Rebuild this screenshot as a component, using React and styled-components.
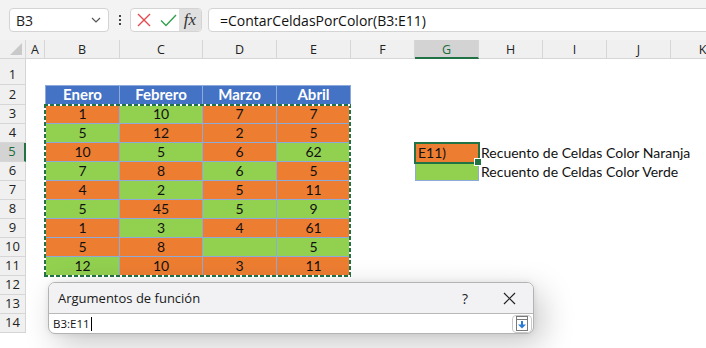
import React from 'react';
import styled, { createGlobalStyle } from 'styled-components';

const GlobalStyle = createGlobalStyle`
  * { box-sizing: border-box; }
  body {
    margin: 0;
    background: #fff;
    font-family: "Open Sans", "Noto Sans", sans-serif;
    overflow: hidden;
  }
`;

const ORANGE = '#ed7d31';
const GREEN = '#92d050';
const BLUE = '#4472c4';
const TBORDER = '#8eaadb';
const XL = '#217346';

const Page = styled.div`
  position: relative;
  width: 706px;
  height: 348px;
  overflow: hidden;
  background: #fff;
`;

const Toolbar = styled.div`
  display: flex;
  align-items: center;
  height: 40px;
  padding-left: 9px;
  background: #f3f3f3;
`;

const NameBox = styled.div`
  display: flex;
  align-items: center;
  justify-content: space-between;
  width: 100px;
  height: 24px;
  padding: 0 7px 0 6px;
  background: #fff;
  border: 1px solid #d4d4d4;
  border-radius: 4px;
  font-size: 14px;
  color: #222;
`;

const Grip = styled.div`
  display: flex;
  flex-direction: column;
  gap: 2px;
  margin: 0 9px 0 10px;
  span {
    width: 2px;
    height: 2px;
    background: #444;
  }
`;

const FxGroup = styled.div`
  display: flex;
  align-items: stretch;
  width: 72px;
  height: 24px;
  background: #fff;
  border: 1px solid #d4d4d4;
  border-radius: 4px;
  overflow: hidden;
`;

const FxButton = styled.div`
  display: flex;
  align-items: center;
  justify-content: center;
  width: ${({ $w }) => $w}px;
  background: ${({ $active }) => ($active ? '#e0e0e0' : 'transparent')};
  font-family: "Liberation Serif", "DejaVu Serif", serif;
  font-style: italic;
  font-size: 17px;
  color: #333;
`;

const FormulaInput = styled.div`
  flex: 1;
  display: flex;
  align-items: center;
  height: 24px;
  margin: 0 -8px 0 6px;
  padding-left: 11px;
  background: #fff;
  border: 1px solid #d4d4d4;
  border-radius: 4px;
  font-size: 14px;
  color: #111;
`;

const Sheet = styled.div`
  display: grid;
  grid-template-columns: 26px 19px 75px 83px 74px 74px 64px 64px 64px 64px 64px 64px;
  grid-template-rows: 19px 25.5px 20.5px repeat(12, 19px);
  font-family: Lato, "Liberation Sans", sans-serif;
  font-size: 14px;
`;

const Corner = styled.div`
  grid-row: 1;
  grid-column: 1;
  position: relative;
  background: #f0f0f0;
  border-right: 1px solid #d6d6d6;
  border-bottom: 1px solid #d6d6d6;
  &::after {
    content: '';
    position: absolute;
    right: 3px;
    bottom: 3px;
    width: 12px;
    height: 12px;
    background: #c9c9c9;
    clip-path: polygon(100% 0, 100% 100%, 0 100%);
  }
`;

const ColHead = styled.div`
  grid-row: 1;
  grid-column: ${({ $c }) => $c};
  display: flex;
  align-items: center;
  justify-content: center;
  padding-top: 1px;
  background: ${({ $sel }) => ($sel ? '#d3d3d3' : '#f0f0f0')};
  border-right: 1px solid #d6d6d6;
  border-bottom: ${({ $sel }) => ($sel ? `2px solid ${XL}` : '1px solid #d6d6d6')};
  font-family: "Open Sans", sans-serif;
  font-size: 12.5px;
  color: ${({ $sel }) => ($sel ? '#1d6b3b' : '#222')};
`;

const RowHead = styled.div`
  grid-row: ${({ $r }) => $r};
  grid-column: 1;
  display: flex;
  align-items: flex-end;
  justify-content: center;
  padding-bottom: 1px;
  background: ${({ $sel }) => ($sel ? '#d3d3d3' : '#f0f0f0')};
  border-bottom: 1px solid #d6d6d6;
  border-right: ${({ $sel }) => ($sel ? `2px solid ${XL}` : '1px solid #d6d6d6')};
  font-family: "Open Sans", sans-serif;
  font-size: 13px;
  line-height: 17px;
  color: ${({ $sel }) => ($sel ? '#1d6b3b' : '#222')};
`;

const fills = { o: ORANGE, g: GREEN, h: BLUE };

const TCell = styled.div`
  grid-row: ${({ $r }) => $r};
  grid-column: ${({ $c }) => $c};
  display: flex;
  align-items: flex-end;
  justify-content: center;
  line-height: 17px;
  padding-bottom: 1px;
  background: ${({ $fill }) => fills[$fill]};
  border-right: 1px solid ${TBORDER};
  border-bottom: 1px solid ${TBORDER};
  border-left: ${({ $first }) => ($first ? `1px solid ${TBORDER}` : 'none')};
  border-top: ${({ $top }) => ($top ? `1px solid ${TBORDER}` : 'none')};
  color: ${({ $fill }) => ($fill === 'h' ? '#fff' : '#111')};
  font-weight: ${({ $fill }) => ($fill === 'h' ? 700 : 400)};
  font-size: ${({ $fill }) => ($fill === 'h' ? '15px' : '14px')};
`;

const Marquee = styled.div`
  grid-row: 4 / 13;
  grid-column: 3 / 7;
  margin: -1px 0 -1px -1px;
  z-index: 2;
  pointer-events: none;
  background:
    repeating-linear-gradient(90deg, ${XL} 0 4px, #fff 4px 6px) top left / 100% 2px no-repeat,
    repeating-linear-gradient(90deg, ${XL} 0 4px, #fff 4px 6px) bottom left / 100% 2px no-repeat,
    repeating-linear-gradient(180deg, ${XL} 0 4px, #fff 4px 6px) top left / 2px 100% no-repeat,
    repeating-linear-gradient(180deg, ${XL} 0 4px, #fff 4px 6px) top right / 2px 100% no-repeat;
`;

const ActiveCell = styled.div`
  grid-row: 6;
  grid-column: 8;
  position: relative;
  z-index: 3;
  display: flex;
  align-items: flex-end;
  margin: -1px -1px -2px -1px;
  padding: 0 0 1px 2px;
  line-height: 17px;
  background: ${ORANGE};
  border: 2px solid ${XL};
  color: #111;
  &::after {
    content: '';
    position: absolute;
    right: -4px;
    bottom: -4px;
    width: 6px;
    height: 6px;
    background: ${XL};
    border: 1px solid #fff;
  }
`;

const SwatchCell = styled.div`
  grid-row: 7;
  grid-column: 8;
  background: ${GREEN};
  border: 1px solid ${TBORDER};
  border-top: none;
`;

const Label = styled.div`
  grid-row: ${({ $r }) => $r};
  grid-column: 9;
  display: flex;
  align-items: flex-end;
  padding: 0 0 1px 2px;
  line-height: 17px;
  white-space: nowrap;
  color: #111;
`;

const Dialog = styled.div`
  position: absolute;
  left: 48px;
  top: 282px;
  width: 486px;
  height: 52px;
  display: flex;
  flex-direction: column;
  background: #fff;
  border: 1px solid #b3b3b3;
  border-radius: 7px;
  overflow: hidden;
  box-shadow: 8px 10px 32px rgba(0, 0, 0, 0.22), 0 0 6px rgba(0, 0, 0, 0.08);
  z-index: 10;
`;

const DialogTitle = styled.div`
  flex: none;
  display: flex;
  align-items: center;
  height: 31px;
  padding: 0 14px 0 9px;
  background: #f2f2f5;
  border-bottom: 1px solid #b8b8b8;
  font-size: 13px;
  color: #1a1a1a;
`;

const TitleText = styled.span`
  flex: 1;
`;

const TitleButton = styled.span`
  display: flex;
  align-items: center;
  justify-content: center;
  width: 20px;
  margin-left: ${({ $gap }) => $gap}px;
  font-size: 14px;
  color: #222;
`;

const DialogInput = styled.div`
  flex: 1;
  display: flex;
  align-items: center;
  padding: 0 1px 0 4px;
  font-size: 11.5px;
  color: #111;
`;

const Caret = styled.span`
  width: 1px;
  height: 14px;
  margin-left: 1px;
  background: #000;
`;

const Spacer = styled.span`
  flex: 1;
`;

const CollapseButton = styled.div`
  display: flex;
  align-items: center;
  justify-content: center;
  width: 20px;
  height: 18px;
  border: 1px solid #c8c8c8;
  border-radius: 4px;
`;

const header = ['Enero', 'Febrero', 'Marzo', 'Abril'];
const data = [
  [[1, 'o'], [10, 'g'], [7, 'o'], [7, 'o']],
  [[5, 'g'], [12, 'o'], [2, 'o'], [5, 'o']],
  [[10, 'o'], [5, 'g'], [6, 'o'], [62, 'g']],
  [[7, 'g'], [8, 'o'], [6, 'g'], [5, 'o']],
  [[4, 'o'], [2, 'g'], [5, 'o'], [11, 'o']],
  [[5, 'g'], [45, 'o'], [5, 'g'], [9, 'g']],
  [[1, 'o'], [3, 'g'], [4, 'o'], [61, 'o']],
  [[5, 'o'], [8, 'o'], ['', 'g'], [5, 'g']],
  [[12, 'g'], [10, 'o'], [3, 'o'], [11, 'o']],
];
const cols = ['A', 'B', 'C', 'D', 'E', 'F', 'G', 'H', 'I', 'J', 'K'];

function Chevron() {
  return (
    <svg width="10" height="6" viewBox="0 0 10 6">
      <polyline points="1,1 5,5 9,1" fill="none" stroke="#555" strokeWidth="1.2" />
    </svg>
  );
}

export default function App() {
  return (
    <Page>
      <GlobalStyle />
      <Toolbar>
        <NameBox>
          <span>B3</span>
          <Chevron />
        </NameBox>
        <Grip>
          <span />
          <span />
          <span />
        </Grip>
        <FxGroup>
          <FxButton $w={26}>
            <svg width="14" height="14" viewBox="0 0 14 14">
              <path d="M1 1 L13 13 M13 1 L1 13" stroke="#e5484d" strokeWidth="1.4" />
            </svg>
          </FxButton>
          <FxButton $w={22}>
            <svg width="17" height="13" viewBox="0 0 17 13">
              <polyline points="1,6.5 6,11.5 16,1" fill="none" stroke="#30a14e" strokeWidth="1.4" />
            </svg>
          </FxButton>
          <FxButton $w={22} $active>fx</FxButton>
        </FxGroup>
        <FormulaInput>=ContarCeldasPorColor(B3:E11)</FormulaInput>
      </Toolbar>

      <Sheet>
        <Corner />
        {cols.map((c, i) => (
          <ColHead key={c} $c={i + 2} $sel={c === 'G'}>
            {c}
          </ColHead>
        ))}
        {Array.from({ length: 14 }, (_, i) => (
          <RowHead key={i} $r={i + 2} $sel={i + 1 === 5}>
            {i + 1}
          </RowHead>
        ))}
        {header.map((h, i) => (
          <TCell key={h} $r={3} $c={i + 3} $fill="h" $first={i === 0} $top>
            {h}
          </TCell>
        ))}
        {data.map((row, r) =>
          row.map(([v, f], c) => (
            <TCell key={`${r}-${c}`} $r={r + 4} $c={c + 3} $fill={f} $first={c === 0}>
              {v}
            </TCell>
          ))
        )}
        <Marquee />
        <ActiveCell>E11)</ActiveCell>
        <SwatchCell />
        <Label $r={6}>Recuento de Celdas Color Naranja</Label>
        <Label $r={7}>Recuento de Celdas Color Verde</Label>
      </Sheet>

      <Dialog>
        <DialogTitle>
          <TitleText>Argumentos de función</TitleText>
          <TitleButton>?</TitleButton>
          <TitleButton $gap={24}>
            <svg width="13" height="13" viewBox="0 0 13 13">
              <path d="M1 1 L12 12 M12 1 L1 12" stroke="#222" strokeWidth="1.2" />
            </svg>
          </TitleButton>
        </DialogTitle>
        <DialogInput>
          <span>B3:E11</span>
          <Caret />
          <Spacer />
          <CollapseButton>
            <svg width="12" height="15" viewBox="0 0 12 15">
              <rect x="0.5" y="0.5" width="11" height="14" fill="#fff" stroke="#7a7a7a" />
              <line x1="1" y1="3.5" x2="11" y2="3.5" stroke="#7a7a7a" />
              <rect x="5" y="5" width="2" height="4" fill="#2d7bd6" />
              <polygon points="2,8.5 10,8.5 6,12.5" fill="#2d7bd6" />
            </svg>
          </CollapseButton>
        </DialogInput>
      </Dialog>
    </Page>
  );
}
